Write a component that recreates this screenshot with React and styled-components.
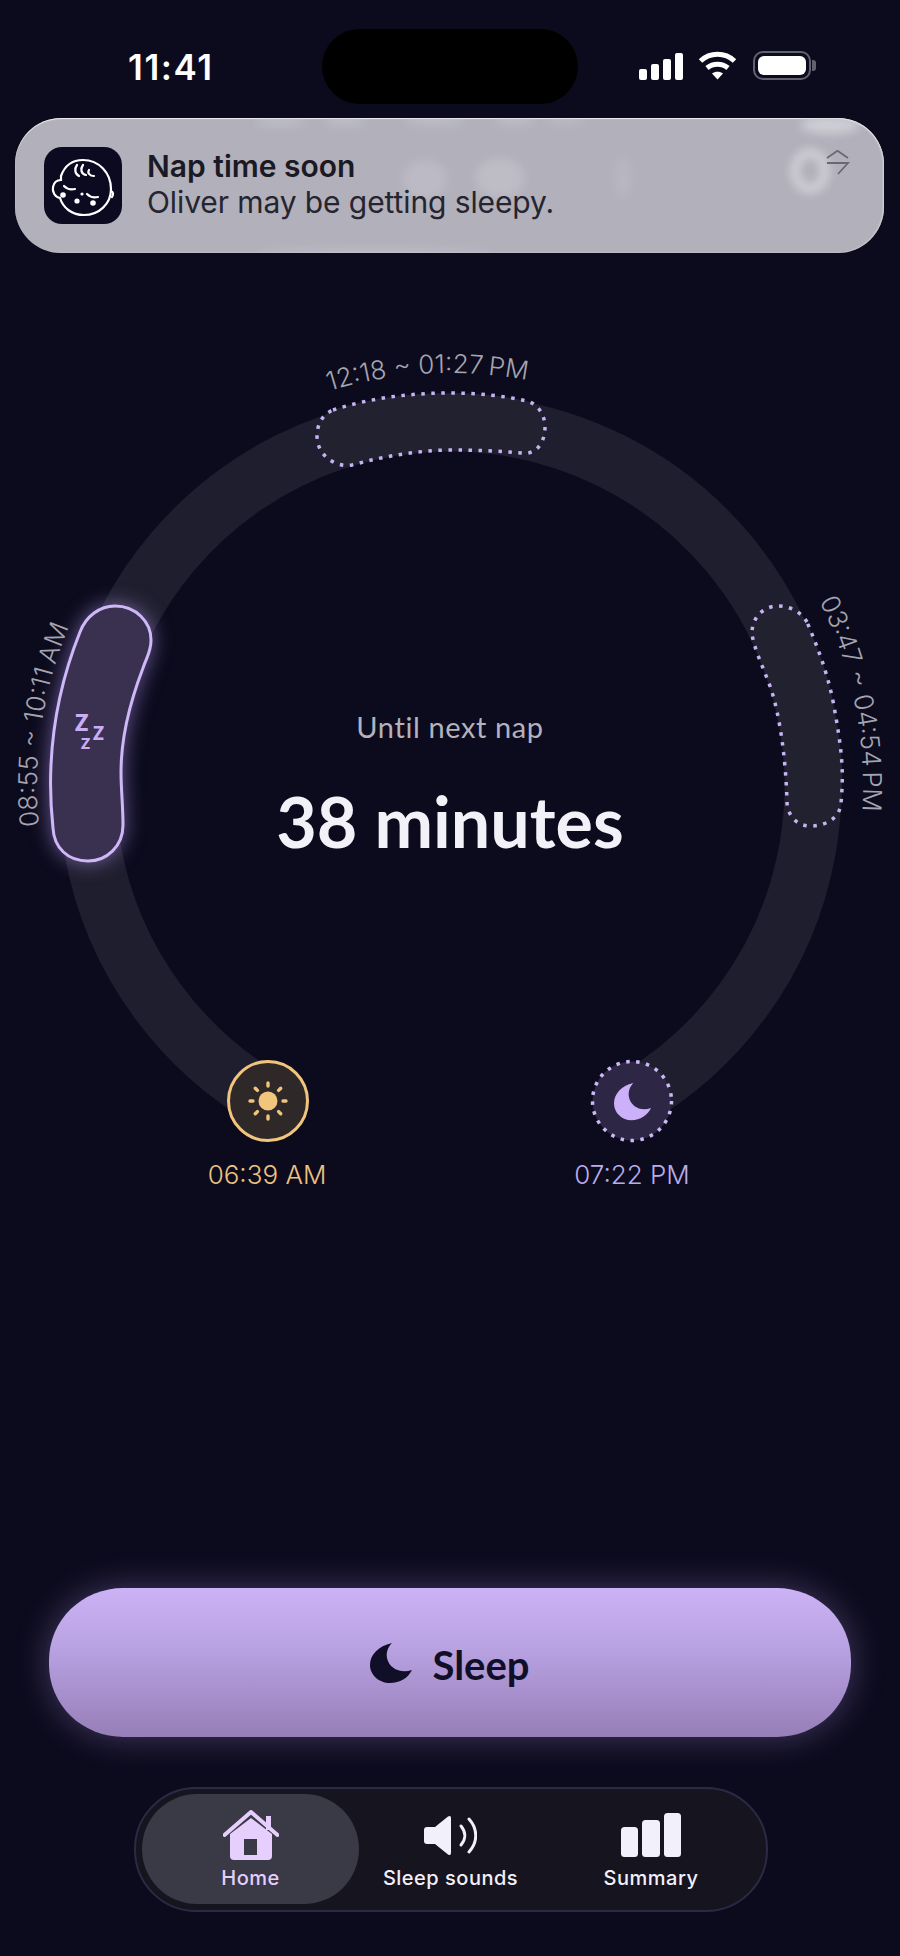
import React from "react";
import styled, { createGlobalStyle } from "styled-components";

const GlobalStyle = createGlobalStyle`
  html, body {
    margin: 0;
    padding: 0;
    background: #0c0b1d;
  }
  * {
    box-sizing: border-box;
  }
`;

const Screen = styled.div`
  width: 900px;
  height: 1956px;
  overflow: hidden;
  display: flex;
  flex-direction: column;
  background: #0c0b1d;
  font-family: Inter, "Liberation Sans", sans-serif;
`;

const StatusBar = styled.div`
  display: grid;
  grid-template-columns: 322px 256px 1fr;
  height: 118px;
  padding-top: 29px;
`;

const Clock = styled.div`
  padding: 18px 0 0 128px;
  color: #fff;
  font-size: 35px;
  font-weight: 600;
  line-height: 40px;
  letter-spacing: 1.6px;
`;

const Island = styled.div`
  width: 256px;
  height: 75px;
  border-radius: 38px;
  background: #000;
`;

const StatusIcons = styled.div`
  display: flex;
  align-items: flex-end;
  gap: 15px;
  height: 51px;
  padding-left: 61px;
`;

const Signal = styled.div`
  display: flex;
  align-items: flex-end;
  gap: 4px;
`;

const SignalBar = styled.span`
  width: 8px;
  height: ${props => props.$h}px;
  border-radius: 2px;
  background: #fff;
`;

const Battery = styled.div`
  position: relative;
  width: 58px;
  height: 29px;
  margin-left: 1px;
  padding: 3px;
  border: 2.5px solid #62616f;
  border-radius: 10px;
  &::after {
    content: "";
    position: absolute;
    right: -7px;
    top: 7px;
    width: 4px;
    height: 11px;
    border-radius: 0 3px 3px 0;
    background: #62616f;
  }
`;

const BatteryFill = styled.div`
  height: 100%;
  border-radius: 6px;
  background: #fff;
`;

const Notification = styled.div`
  position: relative;
  overflow: hidden;
  display: flex;
  align-items: flex-start;
  gap: 25px;
  width: 869px;
  height: 135px;
  margin-left: 15px;
  padding: 29px 0 0 29px;
  border-radius: 46px;
  background: #b1b0bb;
  box-shadow: inset 0 1px 1px rgba(255, 255, 255, 0.75),
    inset -1px 0 2px rgba(255, 255, 255, 0.5);
`;

const Smear = styled.span`
  position: absolute;
  left: ${props => props.$x}px;
  top: ${props => props.$y}px;
  width: ${props => props.$w}px;
  height: ${props => props.$h}px;
  border-radius: 50%;
  background: #d6d5dc;
  opacity: ${props => props.$o || 0.4};
  filter: blur(5px);
`;

const BlurRing = styled.span`
  position: absolute;
  left: 775px;
  top: 30px;
  width: 40px;
  height: 46px;
  border: 10px solid #d9d8de;
  border-radius: 50%;
  opacity: 0.75;
  filter: blur(5px);
`;

const AppIcon = styled.div`
  position: relative;
  flex: none;
  width: 78px;
  height: 77px;
  border-radius: 18px;
  background: #0b0a20;
`;

const NoteText = styled.div`
  position: relative;
  display: flex;
  flex-direction: column;
`;

const NoteTitle = styled.div`
  margin-top: 1px;
  color: #1a1924;
  font-size: 30px;
  font-weight: 600;
  line-height: 36px;
`;

const NoteBody = styled.div`
  color: #25242f;
  font-size: 30px;
  font-weight: 400;
  line-height: 36px;
  letter-spacing: -0.1px;
`;

const StackGlyph = styled.svg`
  position: absolute;
  left: 810px;
  top: 32px;
`;

const DialWrap = styled.div`
  position: relative;
  width: 900px;
  height: 890px;
  margin-top: 87px;
`;

const DialSvg = styled.svg`
  display: block;
`;

const ActivePill = styled.path`
  fill: #3a3150;
  stroke: #cfb8f8;
  stroke-width: 3px;
  filter: drop-shadow(0 0 10px rgba(186, 156, 250, 0.55));
`;

const DottedPill = styled.path`
  fill: #222130;
  stroke: #c7b3f2;
  stroke-width: 3.5px;
  stroke-dasharray: 3.5 6.5;
`;

const ArcLabel = styled.text`
  fill: #a5a4b0;
  font-family: Inter, "Liberation Sans", sans-serif;
  font-size: 26px;
  font-weight: 300;
`;

const ZedLabel = styled.text`
  fill: #c9aef5;
  font-family: Lato, "Liberation Sans", sans-serif;
  font-weight: 800;
  font-size: ${props => props.$size}px;
`;

const TimeLabel = styled.text`
  fill: ${props => props.$color};
  font-family: Inter, "Liberation Sans", sans-serif;
  font-size: 26px;
  font-weight: 300;
  text-anchor: middle;
`;

const Center = styled.div`
  position: absolute;
  left: 0;
  right: 0;
  top: 367px;
  display: flex;
  flex-direction: column;
  align-items: center;
`;

const Until = styled.div`
  color: #b3b2bd;
  font-family: Lato, "Liberation Sans", sans-serif;
  font-size: 29px;
  line-height: 40px;
  letter-spacing: 0.6px;
`;

const Minutes = styled.div`
  margin-top: 33px;
  color: #f2f1f8;
  font-family: Lato, "Liberation Sans", sans-serif;
  font-size: 70px;
  font-weight: 700;
  line-height: 82px;
`;

const SleepButton = styled.button`
  display: flex;
  align-items: center;
  justify-content: center;
  gap: 20px;
  width: 802px;
  height: 149px;
  margin: 358px 0 0 49px;
  padding: 0;
  border: 0;
  border-radius: 74px / 72px;
  background: linear-gradient(180deg, #ccb2f6 0%, #b9a2e2 40%, #967eb8 100%);
  box-shadow: 0 0 34px rgba(190, 160, 245, 0.32);
  color: #110f28;
  font-family: Lato, "Liberation Sans", sans-serif;
  font-size: 40px;
  font-weight: 700;
`;

const SleepText = styled.span`
  margin-top: 4px;
`;

const Nav = styled.nav`
  display: grid;
  grid-template-columns: 217px 183px 1fr;
  width: 634px;
  height: 125px;
  margin: 50px 0 0 134px;
  padding: 5px 6px;
  border: 2px solid #2b2a44;
  border-radius: 62px;
  background: #16151f;
`;

const NavItem = styled.div`
  display: flex;
  flex-direction: column;
  align-items: center;
  height: 110px;
  padding-top: 16px;
  border-radius: 55px;
  background: ${props => (props.$active ? "#3a3946" : "transparent")};
  color: ${props => (props.$active ? "#e6cffc" : "#f1f0fb")};
`;

const NavIcon = styled.div`
  display: flex;
  align-items: center;
  height: 50px;
`;

const NavLabel = styled.div`
  margin-top: 6px;
  font-size: 20px;
  font-weight: 500;
  line-height: 24px;
  letter-spacing: 0.5px;
`;

const CX = 450;
const CY = 786;

const polar = (deg, r) => {
  const a = (deg * Math.PI) / 180;
  return [CX + r * Math.sin(a), CY - r * Math.cos(a)];
};

// clockwise arc, angles measured from the top of the dial
const arc = (from, to, r) => {
  const [x1, y1] = polar(from, r);
  const [x2, y2] = polar(to, r);
  const large = to - from > 180 ? 1 : 0;
  return `M ${x1} ${y1} A ${r} ${r} 0 ${large} 1 ${x2} ${y2}`;
};

const labels = [
  { id: "napA", from: -95.6, to: -67.3, text: "08:55 ~ 10:11\u2009AM" },
  { id: "napB", from: -17, to: 10.8, text: "12:18 ~ 01:27\u2009PM" },
  { id: "napC", from: 63.4, to: 93.5, text: "03:47 ~ 04:54\u2009PM" },
];

const moonPath =
  "M22 0 C8 3 0 12 0 22 C0 32 9 40 20 40 C30 40 38 35 42 27 C30 31 19 25 17 15 C16 9 18 4 22 0 Z";

const sunRays = [0, 45, 90, 135, 180, 225, 270, 315];

function WifiIcon() {
  return (
    <svg width="39" height="29" viewBox="0 0 39 29">
      <g fill="none" stroke="#fff" strokeWidth="5">
        <path d="M2.5 10 C12 1 27 1 36.5 10" />
        <path d="M9 17 C15 12 24 12 30 17" />
      </g>
      <path d="M14 22.5 C17 20 22 20 25 22.5 L19.5 28.5 Z" fill="#fff" />
    </svg>
  );
}

function BabyFace() {
  return (
    <svg width="78" height="77" viewBox="0 0 78 77" fill="none">
      <g stroke="#fff" strokeLinecap="round" strokeWidth="2.2">
        <path d="M17 29 C21 18 29 13 39 13 C55 13 67 26 67 42 C67 57 55 68 40 68 C28 68 19 61 16 51 C11 50 8 45 9 40 C10 35 13 33 17 33 Z" />
        <path d="M67 44 C69 45 70 47 68 50" />
        <path d="M33 18 C30 22 31 27 35 29" />
        <path d="M39 18 C36 22 37 27 42 28" />
        <path d="M45 23 C43 26 46 29 50 29" />
        <path d="M20 39 C23 42 27 43 31 42" />
        <path d="M43 47 C46 50 50 51 54 50" />
      </g>
      <g fill="#fff">
        <circle cx="19" cy="48" r="2.8" />
        <circle cx="33" cy="54" r="2.6" />
        <circle cx="38" cy="47" r="1.6" />
        <circle cx="49" cy="56" r="2.8" />
      </g>
    </svg>
  );
}

function HomeIcon() {
  return (
    <svg width="56" height="50" viewBox="0 0 56 50">
      <path d="M1.5 25 L28 2 L54.5 25" fill="none" stroke="currentColor" strokeWidth="4" strokeLinecap="round" strokeLinejoin="round" />
      <rect x="43" y="6" width="5" height="14" fill="currentColor" />
      <path
        d="M7 24 L28 8 L49 24 L49 46 Q49 50 45 50 L11 50 Q7 50 7 46 Z"
        fill="currentColor"
      />
      <rect x="21" y="29" width="13" height="16" fill="#3a3946" />
    </svg>
  );
}

function SpeakerIcon() {
  return (
    <svg width="53" height="41" viewBox="0 0 53 41" fill="currentColor">
      <path d="M3 12 L11 12 L24 1.5 Q27 0 27 3 L27 38 Q27 41 24 39.5 L11 29 L3 29 Q0 29 0 26 L0 15 Q0 12 3 12 Z" />
      <g fill="none" stroke="currentColor" strokeWidth="3" strokeLinecap="round">
        <path d="M37 11 C42 17 42 24 37 30" />
        <path d="M45 4 C54 14 54 27 45 37" />
      </g>
    </svg>
  );
}

function BarsIcon() {
  return (
    <svg width="60" height="44" viewBox="0 0 60 44" fill="currentColor">
      <rect x="0" y="14" width="17" height="30" rx="3.5" />
      <rect x="21" y="7" width="18" height="37" rx="3.5" />
      <rect x="43" y="0" width="17" height="44" rx="3.5" />
    </svg>
  );
}

export default function App() {
  return (
    <Screen>
      <GlobalStyle />
      <StatusBar>
        <Clock>11:41</Clock>
        <Island />
        <StatusIcons>
          <Signal>
            <SignalBar $h={11} />
            <SignalBar $h={16} />
            <SignalBar $h={21} />
            <SignalBar $h={27} />
          </Signal>
          <WifiIcon />
          <Battery>
            <BatteryFill />
          </Battery>
        </StatusIcons>
      </StatusBar>

      <Notification>
        <Smear $x={240} $y={-2} $w={50} $h={10} />
        <Smear $x={310} $y={-2} $w={40} $h={10} />
        <Smear $x={390} $y={-2} $w={60} $h={9} />
        <Smear $x={480} $y={-2} $w={40} $h={9} />
        <Smear $x={530} $y={-2} $w={40} $h={8} $o={0.3} />
        <Smear $x={388} $y={42} $w={44} $h={40} $o={0.3} />
        <Smear $x={460} $y={40} $w={50} $h={40} $o={0.35} />
        <Smear $x={600} $y={40} $w={16} $h={40} $o={0.2} />
        <Smear $x={785} $y={-2} $w={60} $h={18} $o={0.8} />
        <Smear $x={240} $y={130} $w={240} $h={8} $o={0.35} />
        <BlurRing />
        <AppIcon>
          <BabyFace />
        </AppIcon>
        <NoteText>
          <NoteTitle>Nap time soon</NoteTitle>
          <NoteBody>Oliver may be getting sleepy.</NoteBody>
        </NoteText>
        <StackGlyph width="26" height="25" viewBox="0 0 26 25" fill="none" stroke="#696873" strokeWidth="1.8">
          <path d="M2 8 L12.5 0.8 L23 8" />
          <path d="M2 13 L23 13 L13 24" />
        </StackGlyph>
      </Notification>

      <DialWrap>
        <DialSvg width="900" height="890" viewBox="0 340 900 890">
          <path d={arc(210, 510, 363)} fill="none" stroke="#1f1e2e" strokeWidth="57" />

          <DottedPill d="M333 410 C370 398 410 393 450 393 C478 393 505 396 527 401 C538 404 545 415 545 427 C545 444 535 455 522 453 C498 451 475 450 447 450 C415 451 385 456 352 465 C335 468 317 455 317 436 C317 424 323 414 333 410 Z" />
          <DottedPill d="M807 622 C801 612 790 606 778 606 C763 606 752 618 752 633 C753 645 760 660 770 686 C780 715 786 760 787 803 C788 816 797 826 810 826 C826 826 840 818 841 803 C844 770 842 750 833 701 C827 672 818 648 807 622 Z" />
          <ActivePill d="M80 632 C86 616 100 606 115 606 C136 606 151 622 151 640 C151 652 147 656 143 668 C130 702 121 735 121 772 C121 790 123 806 123 825 C123 846 107 861 88 861 C68 861 54 848 53 828 C50 800 50 785 51 765 C53 720 64 672 80 632 Z" />

          <ZedLabel $size={22} x="75" y="731">Z</ZedLabel>
          <ZedLabel $size={18} x="93" y="740">Z</ZedLabel>
          <ZedLabel $size={15} x="81" y="749">Z</ZedLabel>

          {labels.map(label => (
            <g key={label.id}>
              <path id={label.id} d={arc(label.from, label.to, 413)} fill="none" />
              <ArcLabel>
                <textPath
                  href={`#${label.id}`}
                  textLength={Math.round((413 * (label.to - label.from) * Math.PI) / 180)}
                  lengthAdjust="spacing"
                >
                  {label.text}
                </textPath>
              </ArcLabel>
            </g>
          ))}

          <circle cx="268" cy="1101" r="39.5" fill="#2f2829" stroke="#f2c57c" strokeWidth="3" />
          <circle cx="268" cy="1101" r="9.5" fill="#f2c57c" />
          {sunRays.map(deg => (
            <line
              key={deg}
              x1="268"
              y1="1083"
              x2="268"
              y2="1086"
              transform={`rotate(${deg} 268 1101)`}
              stroke="#f2c57c"
              strokeWidth="3.4"
              strokeLinecap="round"
            />
          ))}
          <TimeLabel $color="#eec27f" x="267" y="1184">06:39 AM</TimeLabel>

          <circle cx="632" cy="1101" r="39.5" fill="#2d2745" stroke="#cdb8f5" strokeWidth="3.5" strokeDasharray="3.5 6.5" />
          <path d={moonPath} transform="translate(614 1083) scale(0.88 0.93)" fill="#cdb0fa" />
          <TimeLabel $color="#bcace9" x="632" y="1184">07:22 PM</TimeLabel>
        </DialSvg>
        <Center>
          <Until>Until next nap</Until>
          <Minutes>38 minutes</Minutes>
        </Center>
      </DialWrap>

      <SleepButton>
        <svg width="42" height="40" viewBox="0 0 42 40">
          <path d={moonPath} fill="#110f28" />
        </svg>
        <SleepText>Sleep</SleepText>
      </SleepButton>

      <Nav>
        <NavItem $active>
          <NavIcon><HomeIcon /></NavIcon>
          <NavLabel>Home</NavLabel>
        </NavItem>
        <NavItem>
          <NavIcon><SpeakerIcon /></NavIcon>
          <NavLabel>Sleep sounds</NavLabel>
        </NavItem>
        <NavItem>
          <NavIcon><BarsIcon /></NavIcon>
          <NavLabel>Summary</NavLabel>
        </NavItem>
      </Nav>
    </Screen>
  );
}
